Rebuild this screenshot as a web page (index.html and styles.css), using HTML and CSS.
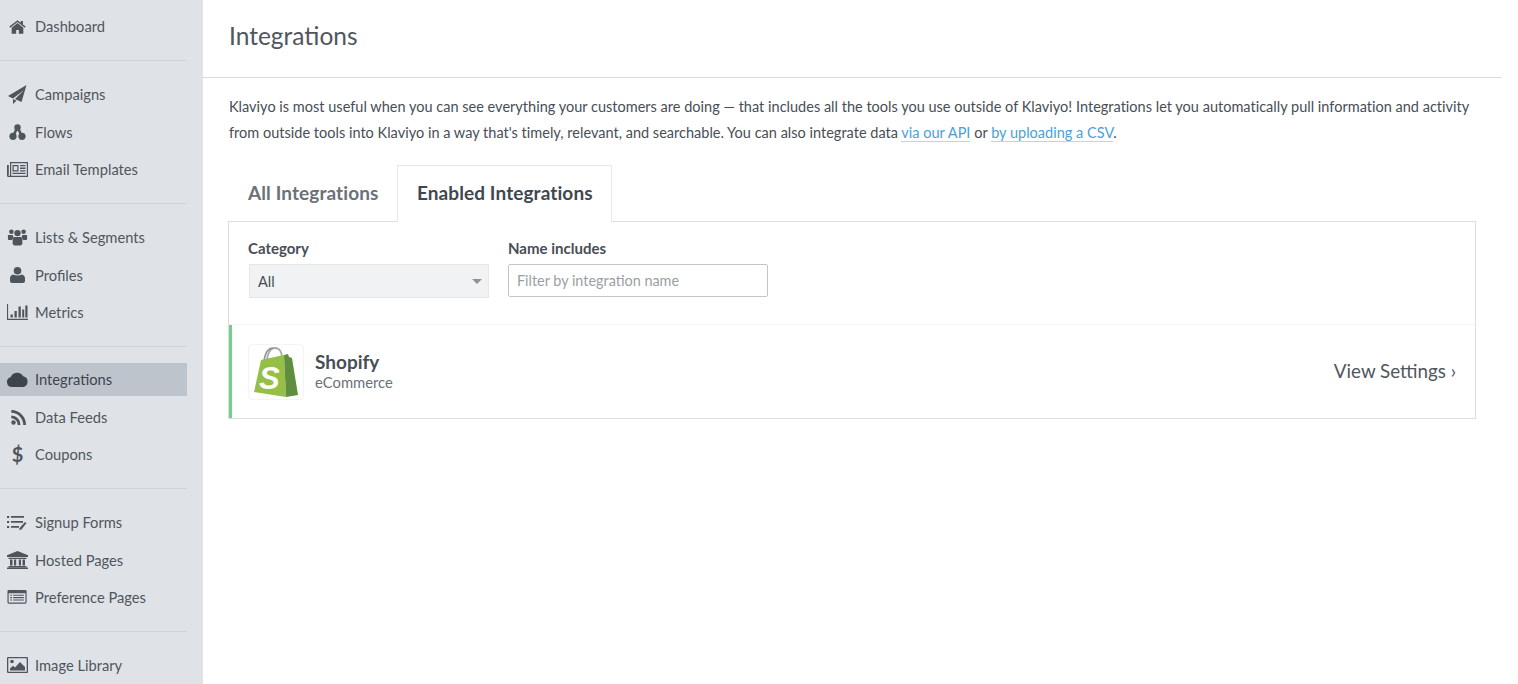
FILE: index.html
```html
<!DOCTYPE html>
<html lang="en">
<head>
<meta charset="utf-8">
<title>Integrations</title>
<link rel="stylesheet" href="styles.css">
</head>
<body>
<div class="app">
  <nav class="sidebar">
    <div class="group">
      <a class="item"><svg class="ico" viewBox="-3 0 27 20"><path d="M10.500 1.500 0 9.800l1.200 1.400 9.300-7.400 9.300 7.400 1.200-1.400-3.500-2.800V2.500h-2.800v2.300z"/><path d="M10.500 5.200 3 11.200V19h5.800v-5h3.400v5H18v-7.800z"/></svg>Dashboard</a>
    </div>
    <div class="group">
      <a class="item"><svg class="ico" viewBox="0 0 21 19"><path d="M19.500 0 1 11l5 2.500L17 5 8 14l6.500 3z"/><path d="M6 14v5l3.500-3.200z"/></svg>Campaigns</a>
      <a class="item"><svg class="ico" viewBox="0 0 21 16"><circle cx="10.500" cy="3.500" r="3.200"/><circle cx="6" cy="12.300" r="3.600"/><circle cx="15" cy="12.300" r="3.600"/><path class="ico-line" d="M9.800 4.500 6.500 11.500M11.200 4.500l3.300 7"/></svg>Flows</a>
      <a class="item"><svg class="ico" viewBox="0 0 21 15"><path fill-rule="evenodd" d="M3 0h18v15H1.500A1.500 1.500 0 0 1 0 13.500V3h1.800v10.200h-.6v.6H2.500A.5.5 0 0 0 3 13.300zM4.200 1.200v12.600h15.600V1.200z"/><path fill-rule="evenodd" d="M5.500 3h6v6.500h-6zm1.200 1.200v4.100h3.600V4.200z"/><path d="M13 3h5.500v1.300H13zM13 5.600h5.500v1.300H13zM13 8.200h5.500v1.300H13zM5.500 10.700h13V12h-13z"/></svg>Email Templates</a>
    </div>
    <div class="group">
      <a class="item"><svg class="ico" viewBox="-1 0 23 18"><circle cx="3.800" cy="3" r="2.500"/><circle cx="17.200" cy="3" r="2.500"/><circle cx="10.500" cy="4.500" r="3.500"/><path d="M0 6.500h5.200l1 2.800-2 2.700H1a1 1 0 0 1-1-1zM21 6.500h-5.200l-1 2.800 2 2.700H20a1 1 0 0 0 1-1z"/><path d="M6.500 8.800h8l1.300 2.500V16a2 2 0 0 1-2 2H7.200a2 2 0 0 1-2-2v-4.700z"/></svg>Lists &amp; Segments</a>
      <a class="item"><svg class="ico" viewBox="0 0 21 16"><circle cx="10.500" cy="3.800" r="3.800"/><path d="M6 7.400c2.500 1.500 6.500 1.500 9 0 1.800.5 3 1.800 3 4.100V14a2 2 0 0 1-2 2H5a2 2 0 0 1-2-2v-2.500c0-2.300 1.200-3.600 3-4.100z"/></svg>Profiles</a>
      <a class="item"><svg class="ico" viewBox="0 0 21 16"><path d="M0 0h1.100v14.800H21V16H0z"/><path d="M3.500 10.500h2.300v3H3.500zM7.500 7h2.300v6.500H7.500zM11.500 2.500h2.300v11h-2.300zM15.200 5.500h2v8h-2zM18.300 1.500h2.200v12h-2.200z"/></svg>Metrics</a>
    </div>
    <div class="group">
      <a class="item active"><svg class="ico" viewBox="0 0 21 16"><path d="M5 16a5 5 0 0 1-1.400-9.800A7 7 0 0 1 16.200 5.200 5.500 5.500 0 0 1 16 16z"/></svg>Integrations</a>
      <a class="item"><svg class="ico" viewBox="0 0 21 16"><circle cx="6.500" cy="13.500" r="2.200"/><path d="M4.300 6.500a9.200 9.200 0 0 1 9.200 9.500h-2.800a6.400 6.400 0 0 0-6.400-6.700z"/><path d="M4.300 1a14.800 14.800 0 0 1 14.700 15h-2.800A12 12 0 0 0 4.300 3.800z"/></svg>Data Feeds</a>
      <a class="item"><span class="dollar">$</span>Coupons</a>
    </div>
    <div class="group">
      <a class="item"><svg class="ico" viewBox="0 0 21 15"><path d="M0 1h2.200v2H0zM0 6h2.200v2H0zM0 11h2.200v2H0zM4 1h13v1.700H4zM4 6h12v1.700H4zM4 11h8v1.700H4z"/><path d="m18 7 1.500 1-5 6.500-2.300.5.400-2z"/></svg>Signup Forms</a>
      <a class="item"><svg class="ico" viewBox="0 0 21 18"><path d="M10.500 0 21 4.200V6H0V4.200z"/><path d="M1.500 6.800h18V8h-18zM3 8.500h2.500v6H3zM7 8.500h2.200v6H7zM11.800 8.500H14v6h-2.200zM15.500 8.500H18v6h-2.500zM1.500 15h18v1.200h-18zM0 16.600h21V18H0z"/></svg>Hosted Pages</a>
      <a class="item"><svg class="ico" viewBox="-0.500 0 23 15.500"><path fill-rule="evenodd" d="M1.500 0h18A1.500 1.500 0 0 1 21 1.500v12a1.500 1.500 0 0 1-1.500 1.500h-18A1.500 1.500 0 0 1 0 13.500v-12A1.500 1.500 0 0 1 1.500 0zM1.300 3.500v10.200h18.400V3.500z"/><path d="M3 5.200h2v1.200H3zM6.200 5.200h11.800v1.200H6.200zM3 7.800h2V9H3zM6.200 7.800h11.800V9H6.200zM3 10.400h2v1.200H3zM6.200 10.400h11.800v1.200H6.200z"/></svg>Preference Pages</a>
    </div>
    <div class="group">
      <a class="item"><svg class="ico" viewBox="0 0 21 16"><path fill-rule="evenodd" d="M1 0h19a1 1 0 0 1 1 1v14a1 1 0 0 1-1 1H1a1 1 0 0 1-1-1V1a1 1 0 0 1 1-1zm.3 1.300v13.400h18.400V1.300z"/><circle cx="5" cy="4.500" r="1.800"/><path d="M3 13.500v-2l3-2.700 2 1.700 5-5.500 5 5v3.500z"/></svg>Image Library</a>
    </div>
  </nav>

  <main class="main">
    <header class="page-head"><h1 class="page-title">Integrations</h1></header>
    <div class="content">
      <p class="intro">Klaviyo is most useful when you can see everything your customers are doing — that includes all the tools you use outside of Klaviyo! Integrations let you automatically pull information and activity from outside tools into Klaviyo in a way that's timely, relevant, and searchable. You can also integrate data <a class="link">via our API</a> or <a class="link">by uploading a CSV</a>.</p>

      <div class="tabs">
        <div class="tab">All Integrations</div>
        <div class="tab tab-active">Enabled Integrations</div>
      </div>

      <section class="panel">
        <div class="filters">
          <div class="field field-cat">
            <label class="label">Category</label>
            <div class="select"><span>All</span><span class="caret"></span></div>
          </div>
          <div class="field field-name">
            <label class="label">Name includes</label>
            <div class="input">Filter by integration name</div>
          </div>
        </div>
        <div class="row">
          <div class="logo">
            <svg class="bag" viewBox="0 0 46 52">
              <path d="M14 15C14 8 17 2 22 2s7 5 7 10" fill="none" stroke="#a3a7a8" stroke-width="1.800"/>
              <path d="M11 15c1-7 4-13 9-13" fill="none" stroke="#8f9596" stroke-width="1.600"/>
              <path d="M1 46 8 14l23-5 2 42z" fill="#95bf47"/>
              <path d="M31 9l4-1 1 3 3 1 6 37-12 2z" fill="#5e8e3e"/>
              <text class="bag-s" x="6" y="43">S</text>
            </svg>
          </div>
          <div class="row-text">
            <div class="row-name">Shopify</div>
            <div class="row-type">eCommerce</div>
          </div>
          <a class="row-link">View Settings ›</a>
        </div>
      </section>
    </div>
  </main>
</div>
</body>
</html>
```

FILE: styles.css
```css
* { box-sizing: border-box; }
html, body { margin: 0; height: 100%; background: #fff; overflow: hidden; }
body { font-family: "Lato", "Open Sans", sans-serif; color: #474e56; }

.app { display: flex; height: 684px; }

.sidebar { width: 203px; flex: none; background: #dfe3e7; padding: 7.6px 16px 0 0; overflow: hidden; }
.group { display: flex; flex-direction: column; padding: 0 0 15px; margin-bottom: 14.5px; border-bottom: 1px solid #cfd3d7; }
.group:last-child { border-bottom: 0; }
.item { display: flex; align-items: center; height: 37.5px; padding-left: 7px; font-size: 14.7px; color: #50565e; }
.item.active { background: #bdc4cc; color: #3d444c; height: 32.5px; margin: 1.5px 0 2.5px; }
.ico { width: 21px; height: auto; margin-right: 7px; flex: none; fill: #4f555c; }
.ico-line { fill: none; stroke: #4f555c; stroke-width: 2.6px; }
.item.active .ico { fill: #3d444c; }
.dollar { width: 21px; margin-right: 7px; text-align: center; font-size: 20px; font-weight: 700; color: #4f555c; }

.main { flex: 1; margin-right: 17px; min-width: 0; }
.page-head { height: 78px; border-bottom: 1px solid #d8dadc; padding: 21px 0 0 26px; }
.page-title { margin: 0; font-size: 24.5px; font-weight: 400; line-height: 30px; color: #50565e; }

.content { padding: 16px 0 0 25px; }
.intro { margin: 0; padding-left: 1px; width: 1273px; font-size: 14.5px; letter-spacing: .012px; line-height: 26px; color: #474e56; }
.link { color: #4a9fd8; border-bottom: 1px solid #b5d8ef; }

.tabs { display: flex; margin-top: 19px; position: relative; z-index: 1; }
.tab { padding: 0 18.5px 0 20px; height: 57px; line-height: 56px; font-size: 19px; letter-spacing: .1px; font-weight: 700; color: #6b7178; }
.tab-active { padding: 0 18px 0 19px; line-height: 54px; background: #fff; color: #3f4750; border: 1px solid #e6e8ea; border-bottom: 0; }

.panel { width: 1248px; margin-top: -1px; border: 1px solid #dcdee0; }
.filters { display: flex; height: 103px; padding: 16px 19px 0; gap: 19px; border-bottom: 1px solid #f6f6f7; }
.field-cat { width: 241px; }
.field-name { width: 260px; }
.label { display: block; font-size: 15px; font-weight: 700; line-height: 20px; color: #474e56; margin-bottom: 6px; }
.select { display: flex; justify-content: space-between; align-items: center; height: 34px; margin-left: 1px; padding: 1px 6px 0 8px; background: #f0f2f4; border: 1px solid #e4e7ea; font-size: 14.5px; color: #474e56; }
.caret { width: 0; height: 0; border: 5px solid transparent; border-top-color: #8d939a; border-bottom: 0; }
.input { height: 33px; padding-left: 8px; line-height: 31px; border: 1px solid #c2c5c9; border-radius: 2px; font-size: 14.4px; color: #9a9fa5; }

.row { display: flex; align-items: center; height: 93px; padding-left: 16px; border-left: 3px solid #72cf90; }
.logo { width: 56px; height: 56px; border: 1px solid #f4f4f5; border-radius: 4px; display: flex; align-items: center; justify-content: center; }
.bag { width: 46px; height: 52px; }
.bag-s { font-family: "Liberation Sans", sans-serif; font-size: 31px; font-weight: 700; font-style: italic; fill: #fff; }
.row-text { margin-left: 11px; flex: 1; }
.row-name { font-size: 19px; font-weight: 700; line-height: 22px; color: #474e56; }
.row-type { font-size: 14.8px; line-height: 19px; color: #6b7178; }
.row-link { margin: 0 19px 2px 0; font-size: 18.8px; color: #50565e; }
```
